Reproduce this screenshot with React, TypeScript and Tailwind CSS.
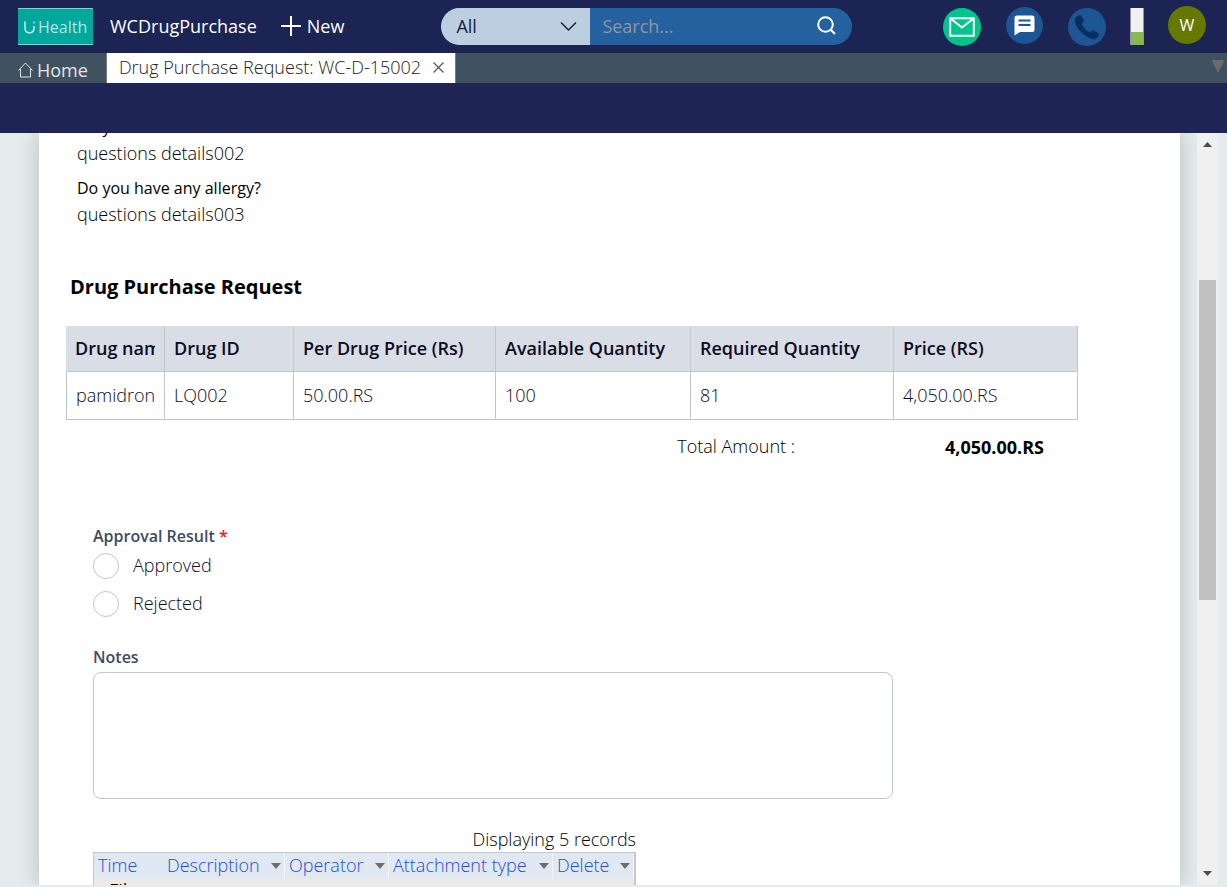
import { useState } from "react";

const drugColumns = [
  "Drug name",
  "Drug ID",
  "Per Drug Price (Rs)",
  "Available Quantity",
  "Required Quantity",
  "Price (RS)",
];

const drugRows = [["pamidronate", "LQ002", "50.00.RS", "100", "81", "4,050.00.RS"]];

const questions = [
  { label: "Do you smoke?", answer: "questions details002" },
  { label: "Do you have any allergy?", answer: "questions details003" },
];

function Logo() {
  return (
    <a
      href="#"
      aria-label="UHealth"
      className="flex h-[37px] w-[75px] items-center gap-[2px] border-y border-[#7fd3cd] bg-[#00a79d] pl-[6px] text-[#b5e6e2]"
    >
      <svg width="12" height="16" viewBox="0 0 12 16" fill="none" aria-hidden="true">
        <path d="M1 2.500V9c0 3 1.800 4.800 4.500 4.800S10 12 10 9V7" stroke="currentColor" strokeWidth="1.700" />
        <circle cx="10" cy="3.500" r="1.300" fill="#6bcbc4" />
      </svg>
      <span className="text-base leading-6">Health</span>
    </a>
  );
}

function TopBar() {
  return (
    <header className="flex h-[53px] shrink-0 items-center bg-[#1b2452] pl-[18px] pr-[21px] text-lg leading-7 text-white">
      <Logo />
      <span className="ml-[17px] pb-[2px]">WCDrugPurchase</span>
      <button type="button" className="ml-6 flex items-center gap-[6px] pb-[2px]">
        <svg width="20" height="20" viewBox="0 0 20 20" aria-hidden="true">
          <path d="M10 0v20M0 10h20" stroke="currentColor" strokeWidth="2" />
        </svg>
        New
      </button>
      <form
        role="search"
        className="ml-[97px] flex h-[37px] w-[411px] overflow-hidden rounded-full bg-[#25619e]"
        onSubmit={(e) => e.preventDefault()}
      >
        <div className="relative w-[149px] shrink-0">
          <select
            aria-label="Search in"
            className="h-full w-full appearance-none bg-[#bccfe1] pb-[2px] pl-[15px] text-[#1b2138] outline-none"
          >
            <option>All</option>
          </select>
          <svg
            className="pointer-events-none absolute right-[13px] top-[13px]"
            width="17"
            height="11"
            viewBox="0 0 17 11"
            fill="none"
            aria-hidden="true"
          >
            <path d="M1 1.500l7.500 7.500L16 1.500" stroke="#1b2138" strokeWidth="1.500" />
          </svg>
        </div>
        <input
          aria-label="Search"
          placeholder="Search..."
          className="min-w-0 flex-1 bg-transparent pb-[2px] pl-3 outline-none placeholder:text-[#8e969e]"
        />
        <button type="submit" aria-label="Search" className="pb-[2px] pr-4">
          <svg width="19" height="19" viewBox="0 0 19 19" fill="none" aria-hidden="true">
            <circle cx="8.500" cy="8.500" r="7.300" stroke="white" strokeWidth="2" />
            <path d="M13.500 13.500l4.500 4.500" stroke="white" strokeWidth="2.200" />
          </svg>
        </button>
      </form>
      <div className="ml-auto flex items-center">
        <button
          type="button"
          aria-label="Mail"
          className="flex size-[38px] items-center justify-center rounded-full bg-[#00c58b]"
        >
          <svg width="26" height="20" viewBox="0 0 26 20" fill="none" aria-hidden="true">
            <path d="M1.200 1.200h23.600v17.600H1.200zM1.200 1.200L13 10.500 24.800 1.200" stroke="white" strokeWidth="2" />
          </svg>
        </button>
        <button
          type="button"
          aria-label="Chat"
          className="mb-[3px] ml-[25px] flex size-[37px] items-center justify-center rounded-full bg-[#1e5594]"
        >
          <svg width="21" height="21" viewBox="0 0 21 21" aria-hidden="true">
            <path d="M3 .5h15a2.500 2.500 0 0 1 2.500 2.500v11.500A2.500 2.500 0 0 1 18 17H6L.5 20.500V3A2.500 2.500 0 0 1 3 .5z" fill="white" />
            <path d="M4.500 5.500h12M4.500 10h12" stroke="#1e5594" strokeWidth="2" />
          </svg>
        </button>
        <button
          type="button"
          aria-label="Call"
          className="ml-[25px] flex size-[38px] items-center justify-center rounded-full bg-[#1e5594]"
        >
          <svg width="26" height="26" viewBox="0 0 26 26" aria-hidden="true">
            <path
              d="M4.500 1.200C5.200.6 6.200.7 6.800 1.500l3 4.200c.5.700.4 1.700-.2 2.300L7.800 9.800c1.200 3.400 4.200 6.800 8 8.700l2-1.800c.6-.5 1.400-.6 2.100-.1l4.600 3c.8.500 1 1.500.4 2.200l-2.300 2.300c-1.300 1.300-3.200 1.400-5.300.7C9.500 22 2.600 14.600.9 7.800.4 5.800.8 4.400 2 3.300z"
              fill="#06305f"
            />
          </svg>
        </button>
        <div className="ml-6 flex h-[37px] w-[14px] flex-col border-x border-[#8b93a0] bg-[#f0f0f0]">
          <div className="mt-6 flex-1 bg-[#86b956]" />
        </div>
        <button
          type="button"
          aria-label="Account"
          className="mb-1 ml-6 size-[38px] rounded-full bg-[#667800] text-base"
        >
          W
        </button>
      </div>
    </header>
  );
}

function TabBar() {
  return (
    <nav className="flex h-[30px] shrink-0 bg-[#405160] text-lg">
      <a href="#" className="flex items-center gap-1 px-[18px] pt-1 text-[#e3e6e8]">
        <svg width="15" height="16" viewBox="0 0 15 16" fill="none" aria-hidden="true">
          <path d="M.5 8.500L7.500 1l7 7.500M2.500 7v8h10V7" stroke="currentColor" strokeWidth="1" />
        </svg>
        <span className="leading-6">Home</span>
      </a>
      <div className="flex items-center border-x border-[#7b7b7b] bg-white pb-[2px] pl-3 pr-[11px] text-[#222]">
        <a href="#" className="font-light leading-7">
          Drug Purchase Request: WC-D-15002
        </a>
        <button type="button" aria-label="Close tab" className="ml-3">
          <svg width="11" height="11" viewBox="0 0 11 11" aria-hidden="true">
            <path d="M.5.5l10 10M10.500.5l-10 10" stroke="#555" strokeWidth="1.200" />
          </svg>
        </button>
      </div>
      <button type="button" aria-label="All tabs" className="ml-auto self-start pr-[2px] pt-[7px]">
        <svg width="14" height="13" viewBox="0 0 14 13" aria-hidden="true">
          <path d="M.5 0h13L7 13z" fill="#6b6b6b" />
        </svg>
      </button>
    </nav>
  );
}

function DrugTable() {
  return (
    <table className="w-full table-fixed border-separate border-spacing-0 text-left text-lg text-[#0c0c24]">
      <colgroup>
        <col className="w-[99px]" />
        <col className="w-[129px]" />
        <col className="w-[202px]" />
        <col className="w-[195px]" />
        <col className="w-[203px]" />
        <col />
      </colgroup>
      <thead>
        <tr className="h-[46px] bg-[#d9dde6]">
          {drugColumns.map((name) => (
            <th
              key={name}
              scope="col"
              className="border-b border-r border-[#c1c5d0] px-[9px] pb-[2px] font-semibold"
            >
              <div className="overflow-hidden whitespace-nowrap">{name}</div>
            </th>
          ))}
        </tr>
      </thead>
      <tbody>
        {drugRows.map((row) => (
          <tr key={row[0]} className="h-12">
            {row.map((cell, i) => (
              <td
                key={drugColumns[i]}
                className="border-b border-r border-[#c1c5d0] px-[9px] pb-[2px] font-light first:border-l"
              >
                <div className="overflow-hidden whitespace-nowrap">{cell}</div>
              </td>
            ))}
          </tr>
        ))}
      </tbody>
    </table>
  );
}

function SortArrow() {
  return (
    <svg className="shrink-0" width="10" height="6" viewBox="0 0 10 6" aria-hidden="true">
      <path d="M0 0h10L5 6z" fill="#6e6e6e" />
    </svg>
  );
}

const attachmentColumns = [
  { name: "Time", width: "w-[69px]", sortable: false },
  { name: "Description", width: "w-[122px]", sortable: true },
  { name: "Operator", width: "w-[104px]", sortable: true },
  { name: "Attachment type", width: "w-[164px]", sortable: true },
  { name: "Delete", width: "w-[81px]", sortable: true },
];

function Attachments() {
  return (
    <section className="w-[543px] text-lg">
      <p className="text-right font-light leading-[26px] text-black">Displaying 5 records</p>
      <table className="w-full table-fixed border-separate border-spacing-0 border-l border-r-2 border-t border-[#c6c8cc] text-left">
        <colgroup>
          {attachmentColumns.map((c) => (
            <col key={c.name} className={c.width} />
          ))}
        </colgroup>
        <thead>
          <tr className="h-[25px] bg-[#e0e8f4]">
            {attachmentColumns.map((c) => (
              <th
                key={c.name}
                scope="col"
                className={
                  c.sortable
                    ? "border-r border-[#f3f6fb] p-0 pl-1 pr-[3px] font-light"
                    : "p-0 pl-1 font-light"
                }
              >
                <button
                  type="button"
                  className="flex w-full items-center justify-between whitespace-nowrap leading-[25px] text-[#1f50d2]"
                >
                  {c.name}
                  {c.sortable && <SortArrow />}
                </button>
              </th>
            ))}
          </tr>
        </thead>
        <tbody>
          <tr className="bg-[#edeae6]">
            <td colSpan={5} className="p-0 pl-[15px] font-normal leading-[25px] text-black">
              File
            </td>
          </tr>
        </tbody>
      </table>
    </section>
  );
}

function ApprovalForm() {
  const [result, setResult] = useState("");
  return (
    <form className="text-lg" onSubmit={(e) => e.preventDefault()}>
      <fieldset>
        <legend className="text-base font-semibold leading-6 text-[#404b5e]">
          Approval Result <span className="text-[#e02020]">*</span>
        </legend>
        <div className="flex flex-col items-start gap-3 pt-[5px]">
          {["Approved", "Rejected"].map((option) => (
            <label key={option} className="flex h-[26px] items-center gap-[14px] text-[#0c0c24]">
              <input
                type="radio"
                name="approval"
                value={option}
                checked={result === option}
                onChange={() => setResult(option)}
                className="size-[26px] appearance-none rounded-full border border-[#c1c7d0] bg-white checked:border-8 checked:border-[#25619e]"
              />
              <span className="pb-[2px] font-light">{option}</span>
            </label>
          ))}
        </div>
      </fieldset>
      <label htmlFor="notes" className="mt-7 block text-base font-semibold leading-6 text-[#404b5e]">
        Notes
      </label>
      <textarea
        id="notes"
        className="mt-[3px] block h-[127px] w-full max-w-[800px] resize-none rounded-lg border border-[#c1c7d0] bg-white p-2 outline-none"
      />
    </form>
  );
}

function Scrollbar() {
  return (
    <div
      aria-hidden="true"
      className="mr-[9px] flex w-[21px] shrink-0 flex-col items-center bg-[#f0f0f0] py-[9px]"
    >
      <svg width="9" height="5" viewBox="0 0 9 5">
        <path d="M0 5h9L4.500 0z" fill="#4d4d4d" />
      </svg>
      <div className="flex w-[17px] flex-1 flex-col pb-[271px] pt-[133px]">
        <div className="flex-1 bg-[#c1c1c1]" />
      </div>
      <svg width="9" height="5" viewBox="0 0 9 5">
        <path d="M0 0h9L4.500 5z" fill="#4d4d4d" />
      </svg>
    </div>
  );
}

export default function App() {
  return (
    <div className="flex h-screen flex-col overflow-hidden bg-[#e5eaed] font-['Open_Sans',sans-serif]">
      <TopBar />
      <TabBar />
      <div className="h-[50px] shrink-0 bg-[#1e2555]" />
      <div className="mb-[2px] flex min-h-0 flex-1">
        <div className="min-w-0 flex-1 overflow-hidden pl-[39px] pr-[17px]">
          <main className="h-full bg-white pl-[27px] shadow-[0_0_20px_rgba(0,0,0,0.2)]">
            <div className="h-full overflow-hidden">
              <dl className="-mt-[18px] flex flex-col gap-[9px] pl-[11px] text-black">
                {questions.map((q) => (
                  <div key={q.label}>
                    <dt className="text-base leading-[25px]">{q.label}</dt>
                    <dd className="text-lg font-light leading-[27px]">{q.answer}</dd>
                  </div>
                ))}
              </dl>
              <h2 className="mt-[45px] pl-1 text-xl font-bold leading-7 text-black">
                Drug Purchase Request
              </h2>
              <div className="mr-[102px] mt-[25px]">
                <DrugTable />
                <div className="flex items-center justify-end gap-[150px] pr-[34px] pt-3 text-lg leading-7 text-black">
                  <span className="pb-[2px] font-light">Total Amount :</span>
                  <strong className="font-bold">4,050.00.RS</strong>
                </div>
              </div>
              <div className="mt-[62px] pl-[27px]">
                <ApprovalForm />
                <div className="mt-[27px]">
                  <Attachments />
                </div>
              </div>
            </div>
          </main>
        </div>
        <Scrollbar />
      </div>
    </div>
  );
}
